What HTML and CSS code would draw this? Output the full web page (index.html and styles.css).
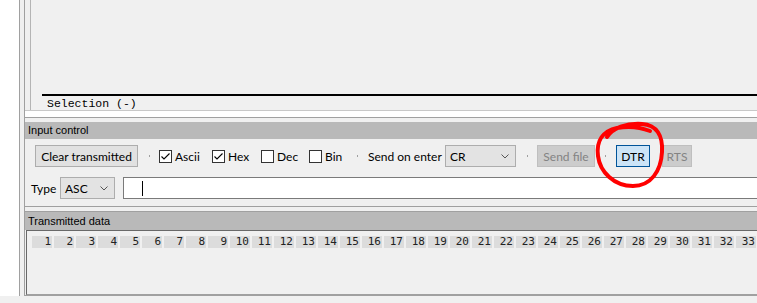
FILE: index.html
```html
<!DOCTYPE html>
<html>
<head>
<meta charset="utf-8">
<link rel="stylesheet" href="styles.css">
</head>
<body>
<div class="app">
  <div class="left-blank"></div>
  <div class="gutter"></div>
  <div class="main">
    <div class="top-panel">
      <div class="top-inner">
        <div class="sel-rule"></div>
        <div class="sel-text">Selection (-)</div>
      </div>
    </div>
    <div class="splitter"></div>
    <section class="group group-input">
      <div class="group-head">Input control</div>
      <div class="input-body">
        <div class="row1">
          <div class="btn btn-clear">Clear transmitted</div>
          <span class="dot dot-a"></span>
          <label class="chk chk-ascii"><span class="box"><svg width="11" height="11" viewBox="0 0 11 11"><path d="M1.5 5.5 L4 8 L9.5 2.5" fill="none" stroke="#000" stroke-width="1.1"/></svg></span><span class="lbl">Ascii</span></label>
          <label class="chk chk-hex"><span class="box"><svg width="11" height="11" viewBox="0 0 11 11"><path d="M1.5 5.5 L4 8 L9.5 2.5" fill="none" stroke="#000" stroke-width="1.1"/></svg></span><span class="lbl">Hex</span></label>
          <label class="chk chk-dec"><span class="box"></span><span class="lbl">Dec</span></label>
          <label class="chk chk-bin"><span class="box"></span><span class="lbl">Bin</span></label>
          <span class="dot dot-b"></span>
          <span class="send-lbl">Send on enter</span>
          <div class="select select-cr"><span>CR</span><svg class="chev" width="8" height="5" viewBox="0 0 8 5"><path d="M0.5 0.5 L4 4 L7.5 0.5" fill="none" stroke="#555" stroke-width="1"/></svg></div>
          <span class="dot dot-c"></span>
          <div class="btn disabled btn-file">Send file</div>
          <span class="dot dot-d"></span>
          <div class="btn active btn-dtr">DTR</div>
          <div class="btn disabled btn-rts">RTS</div>
        </div>
        <div class="row2">
          <span class="type-lbl">Type</span>
          <div class="select select-asc"><span>ASC</span><svg class="chev" width="8" height="5" viewBox="0 0 8 5"><path d="M0.5 0.5 L4 4 L7.5 0.5" fill="none" stroke="#555" stroke-width="1"/></svg></div>
          <div class="textbox"><span class="caret"></span></div>
        </div>
      </div>
    </section>
    <div class="gap"></div>
    <section class="group group-tx">
      <div class="group-head group-head-tx">Transmitted data</div>
      <div class="tx-panel">
        <div class="cells">
          <span class="cell">1</span><span class="cell">2</span><span class="cell">3</span><span class="cell">4</span><span class="cell">5</span><span class="cell">6</span><span class="cell">7</span><span class="cell">8</span><span class="cell">9</span><span class="cell">10</span><span class="cell">11</span><span class="cell">12</span><span class="cell">13</span><span class="cell">14</span><span class="cell">15</span><span class="cell">16</span><span class="cell">17</span><span class="cell">18</span><span class="cell">19</span><span class="cell">20</span><span class="cell">21</span><span class="cell">22</span><span class="cell">23</span><span class="cell">24</span><span class="cell">25</span><span class="cell">26</span><span class="cell">27</span><span class="cell">28</span><span class="cell">29</span><span class="cell">30</span><span class="cell">31</span><span class="cell">32</span><span class="cell">33</span>
        </div>
      </div>
    </section>
  </div>
</div>
<svg class="annot" width="757" height="303" viewBox="0 0 757 303">
  <path d="M607 137 C 612 128, 627 123, 642 124 C 657 125, 663 136, 662 152 C 661 171, 651 186, 633 186 C 614 186, 600 172, 598 156 C 596 141, 603 131, 617 128 C 628 126, 640 127, 650 131" fill="none" stroke="#f00" stroke-width="4" stroke-linecap="round" stroke-linejoin="round"/>
</svg>
</body>
</html>
```

FILE: styles.css
```css
* { box-sizing: border-box; }
body {
  margin: 0;
  width: 757px;
  height: 303px;
  overflow: hidden;
  background: #f0f0f0;
  font-family: Lato, "Liberation Sans", sans-serif;
  font-size: 12px;
  color: #000;
  position: relative;
}
.app { display: flex; height: 296px; }
.left-blank { width: 19px; background: #fff; }
.gutter {
  width: 6px;
  border-left: 1px solid #a0a0a0;
  border-right: 1px solid #a0a0a0;
  background: #f0f0f0;
}
.main { flex: 1; display: flex; flex-direction: column; min-width: 0; overflow: hidden; }

.top-panel {
  height: 112px;
  padding-left: 5px;
  border-bottom: 1px solid #c8c8c8;
}
.top-inner {
  height: 100%;
  border-left: 1px solid #b4b4b4;
  padding-left: 11px;
  padding-top: 94px;
}
.sel-rule { height: 2px; background: #000; }
.sel-text {
  font-family: "Liberation Mono", monospace;
  font-size: 11.5px;
  line-height: 13px;
  padding-left: 5px;
  margin-top: 1px;
  white-space: pre;
}
.splitter { height: 6px; background: #fff; }

.group { border-top: 1px solid #a0a0a0; border-bottom: 1px solid #a0a0a0; }
.group-input { padding-top: 4px; }
.group-head {
  height: 17px;
  background: #b9b9b9;
  font-family: "Liberation Sans", Arial, sans-serif;
  font-size: 11px;
  line-height: 17px;
  padding-left: 3px;
}
.group-head-tx { height: 18px; line-height: 18px; }
.input-body { height: 67px; padding-top: 6px; }

.row1 { display: flex; align-items: center; height: 22px; padding-left: 10px; }
.row2 { display: flex; align-items: center; height: 22px; margin-top: 10px; padding-left: 6px; margin-right: -6px; }

.btn {
  height: 22px;
  border: 1px solid #adadad;
  background: #e1e1e1;
  display: flex;
  align-items: center;
  justify-content: center;
  white-space: nowrap;
}
.btn.disabled { background: #cccccc; border-color: #bfbfbf; color: #838383; }
.btn.active { background: #cce4f7; border-color: #005499; }
.btn-clear { width: 103px; }
.btn-file { width: 58px; margin-left: 9px; }
.btn-dtr { width: 34px; margin-left: 10px; }
.btn-rts { width: 30px; margin-left: 12px; }

.dot { width: 1px; height: 2px; background: #a0a0a0; flex: none; }
.dot-a { margin-left: 11px; }
.dot-b { margin-left: 14px; }
.dot-c { margin-left: 11px; }
.dot-d { margin-left: 10px; }

.chk { display: flex; align-items: center; flex: none; }
.box {
  width: 13px;
  height: 13px;
  border: 1px solid #333;
  background: #fff;
  display: flex;
}
.lbl { margin-left: 3px; }
.chk-ascii { width: 53px; margin-left: 9px; }
.chk-hex { width: 49px; }
.chk-dec { width: 48px; }
.chk-bin { width: 34px; }

.send-lbl { margin-left: 10px; width: 73px; white-space: nowrap; }

.select {
  height: 22px;
  border: 1px solid #adadad;
  background: #e3e3e3;
  display: flex;
  align-items: center;
  justify-content: space-between;
  padding: 0 6px 0 4px;
}
.select-cr { width: 71px; margin-left: 4px; }
.select-asc { width: 55px; margin-left: 4px; }
.chev { flex: none; }

.type-lbl { width: 25px; }
.textbox {
  flex: 1;
  height: 22px;
  margin-left: 8px;
  border: 1px solid #7a7a7a;
  background: #fff;
  display: flex;
  align-items: center;
}
.caret { width: 1px; height: 15px; background: #000; margin-left: 18px; }

.gap { height: 4px; }
.tx-panel {
  height: 65px;
  margin-left: 1px;
  border-top: 1px solid #696969;
  border-left: 1px solid #696969;
  border-bottom: 1px solid #a0a0a0;
  background: #f0f0f0;
  overflow: hidden;
}
.cells { display: flex; gap: 2px; padding: 5px 0 0 5px; }
.cell {
  flex: none;
  width: 20px;
  height: 12px;
  background: #dcdcdc;
  font-family: "DejaVu Sans Mono", monospace;
  font-size: 11px;
  line-height: 12px;
  text-align: right;
  padding-right: 1px;
  color: #222;
}

.annot { position: absolute; left: 0; top: 0; pointer-events: none; }
```
